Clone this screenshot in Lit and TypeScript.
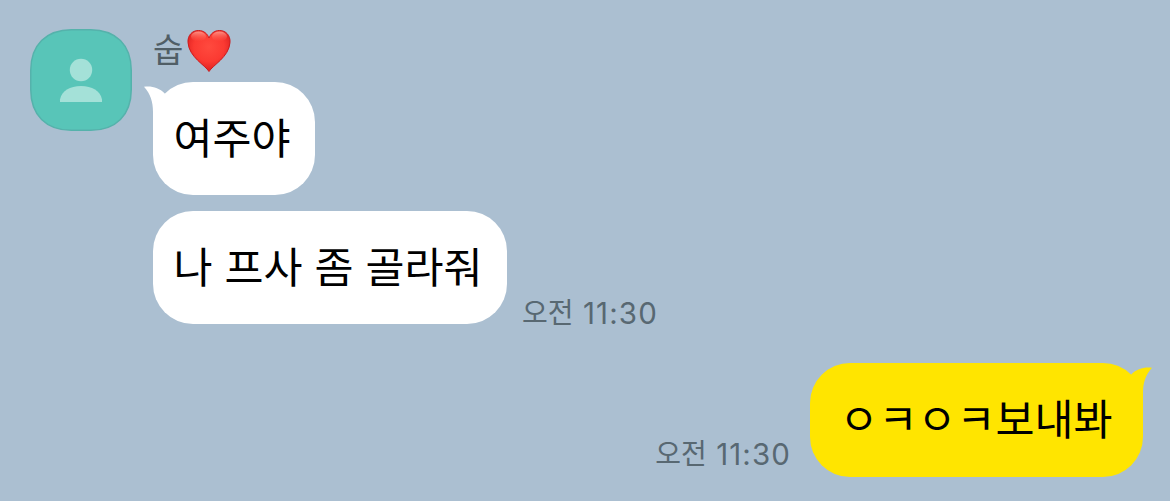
import { LitElement, css, html, svg } from 'lit'
import { customElement, property } from 'lit/decorators.js'

@customElement('chat-avatar')
export class ChatAvatar extends LitElement {
  render() {
    return html`
      <svg viewBox="0 0 102 102" aria-hidden="true">
        <path
          class="shape"
          d="M41.500 .75H60.500C86 .75 101.250 16 101.250 41.500V60.500C101.250 86 86 101.250 60.500 101.250H41.500C16 101.250 .75 86 .75 60.500V41.500C.75 16 16 .75 41.500 .75Z"
        />
        <circle class="person" cx="51" cy="41" r="11.2" />
        <path class="person" d="M30 73V70.500C31.500 62 40 57 51 57s19.500 5 21 13.500V73Z" />
      </svg>
    `
  }

  static styles = css`
    :host {
      display: block;
      flex: none;
      width: 102px;
      height: 102px;
    }

    svg {
      display: block;
      width: 100%;
      height: 100%;
    }

    .shape {
      fill: #58c5b8;
      stroke: #55b2ab;
      stroke-width: 1.5;
    }

    .person {
      fill: #a4e1d8;
    }
  `
}

@customElement('chat-bubble')
export class ChatBubble extends LitElement {
  @property({ type: Boolean, reflect: true })
  mine = false

  @property({ type: Boolean, reflect: true })
  tail = false

  render() {
    return html`
      ${this.tail
        ? html`
            <svg class="tail" viewBox="0 0 24 37" aria-hidden="true">
              ${svg`<path d="M0 .8C8-.2 15 1.800 20.800 7.500L24 37H9V26C9 16 6.500 8 0 .8Z" />`}
            </svg>
          `
        : null}
      <slot></slot>
    `
  }

  static styles = css`
    :host {
      display: block;
      position: relative;
      box-sizing: border-box;
      height: 113px;
      padding: 0 24.5px 0 20.5px;
      border-radius: 40px;
      background: #ffffff;
      color: #000000;
      font-size: 42.4px;
      line-height: 107px;
      white-space: nowrap;
      word-spacing: 2.5px;
    }

    :host([mine]) {
      height: 114px;
      padding: 0 30.5px 0 29.5px;
      background: #ffe500;
      line-height: 108px;
    }

    .tail {
      position: absolute;
      top: 4px;
      left: -9px;
      width: 24px;
      height: 37px;
      fill: #ffffff;
    }

    :host([mine]) .tail {
      right: -9px;
      left: auto;
      fill: #ffe500;
      transform: scaleX(-1);
    }
  `
}

@customElement('chat-time')
export class ChatTime extends LitElement {
  @property({ type: String })
  period = '오전'

  @property({ type: String })
  time = ''

  render() {
    return html`<span class="period">${this.period}</span><span class="clock">${this.time}</span>`
  }

  static styles = css`
    :host {
      display: flex;
      gap: 9.5px;
      color: #586872;
      font-family: Inter, 'Noto Sans CJK KR', sans-serif;
      font-size: 29.5px;
      line-height: 34px;
      white-space: nowrap;
    }

    .period {
      font-family: 'Noto Sans CJK KR', sans-serif;
      font-size: 28px;
      line-height: 31px;
    }

    .clock {
      letter-spacing: 1.1px;
      margin-right: -1px;
    }
  `
}

@customElement('app-root')
export class AppRoot extends LitElement {
  render() {
    return html`
      <main>
        <section class="received">
          <chat-avatar></chat-avatar>
          <div class="messages">
            <div class="name">
              <span>숩</span>
              <svg class="heart" viewBox="0 0 44 44" role="img" aria-label="❤️">
                <defs>
                  <radialGradient id="heart-fill" cx=".5" cy=".4" r=".6">
                    <stop offset="0" stop-color="#ff4a3e" />
                    <stop offset=".6" stop-color="#fb3a32" />
                    <stop offset="1" stop-color="#dc1f1f" />
                  </radialGradient>
                  <linearGradient id="heart-shine" x2="0" y2="1">
                    <stop offset="0" stop-color="#ff9b8e" stop-opacity=".9" />
                    <stop offset="1" stop-color="#ff5a4e" stop-opacity="0" />
                  </linearGradient>
                </defs>
                <path
                  fill="url(#heart-fill)"
                  stroke="#cc1a1c"
                  d="M22 42.500C18 36 2 28 1 13.500 .5 6.500 5 1.500 11.500 1.500 17 1.500 20.500 5 22 9 23.500 5 27 1.500 32.500 1.500 39 1.500 43.500 6.500 43 13.500 42 28 26 36 22 42.500Z"
                />
                <ellipse fill="url(#heart-shine)" cx="11.500" cy="7.500" rx="7.500" ry="5" />
                <ellipse fill="url(#heart-shine)" cx="32.500" cy="7.500" rx="7.500" ry="5" />
              </svg>
            </div>
            <chat-bubble tail>여주야</chat-bubble>
            <div class="row">
              <chat-bubble>나 프사 좀 골라줘</chat-bubble>
              <chat-time time="11:30"></chat-time>
            </div>
          </div>
        </section>

        <section class="sent">
          <chat-time time="11:30"></chat-time>
          <chat-bubble mine tail>ㅇㅋㅇㅋ보내봐</chat-bubble>
        </section>
      </main>
    `
  }

  static styles = css`
    :host {
      display: block;
      font-family: 'Noto Sans CJK KR', sans-serif;
    }

    main {
      box-sizing: border-box;
      height: 501px;
      padding: 29px 27px 24px 30px;
      overflow: hidden;
      background: #abbfd1;
    }

    .received {
      display: flex;
      align-items: flex-start;
      gap: 21px;
    }

    .messages {
      display: flex;
      flex-direction: column;
      align-items: flex-start;
    }

    .name {
      display: flex;
      align-items: flex-start;
      gap: 4px;
      height: 53px;
      color: #505e66;
      font-size: 33px;
      line-height: 38px;
    }

    .heart {
      width: 44px;
      height: 44px;
    }

    .row {
      display: flex;
      align-items: flex-end;
      gap: 15px;
      margin-top: 16px;
    }

    .row chat-time {
      margin-bottom: -6px;
    }

    .sent {
      display: flex;
      align-items: flex-end;
      justify-content: flex-end;
      gap: 20px;
      margin-top: 39px;
    }

    .sent chat-time {
      margin-bottom: 6px;
    }
  `
}

declare global {
  interface HTMLElementTagNameMap {
    'app-root': AppRoot
    'chat-avatar': ChatAvatar
    'chat-bubble': ChatBubble
    'chat-time': ChatTime
  }
}
